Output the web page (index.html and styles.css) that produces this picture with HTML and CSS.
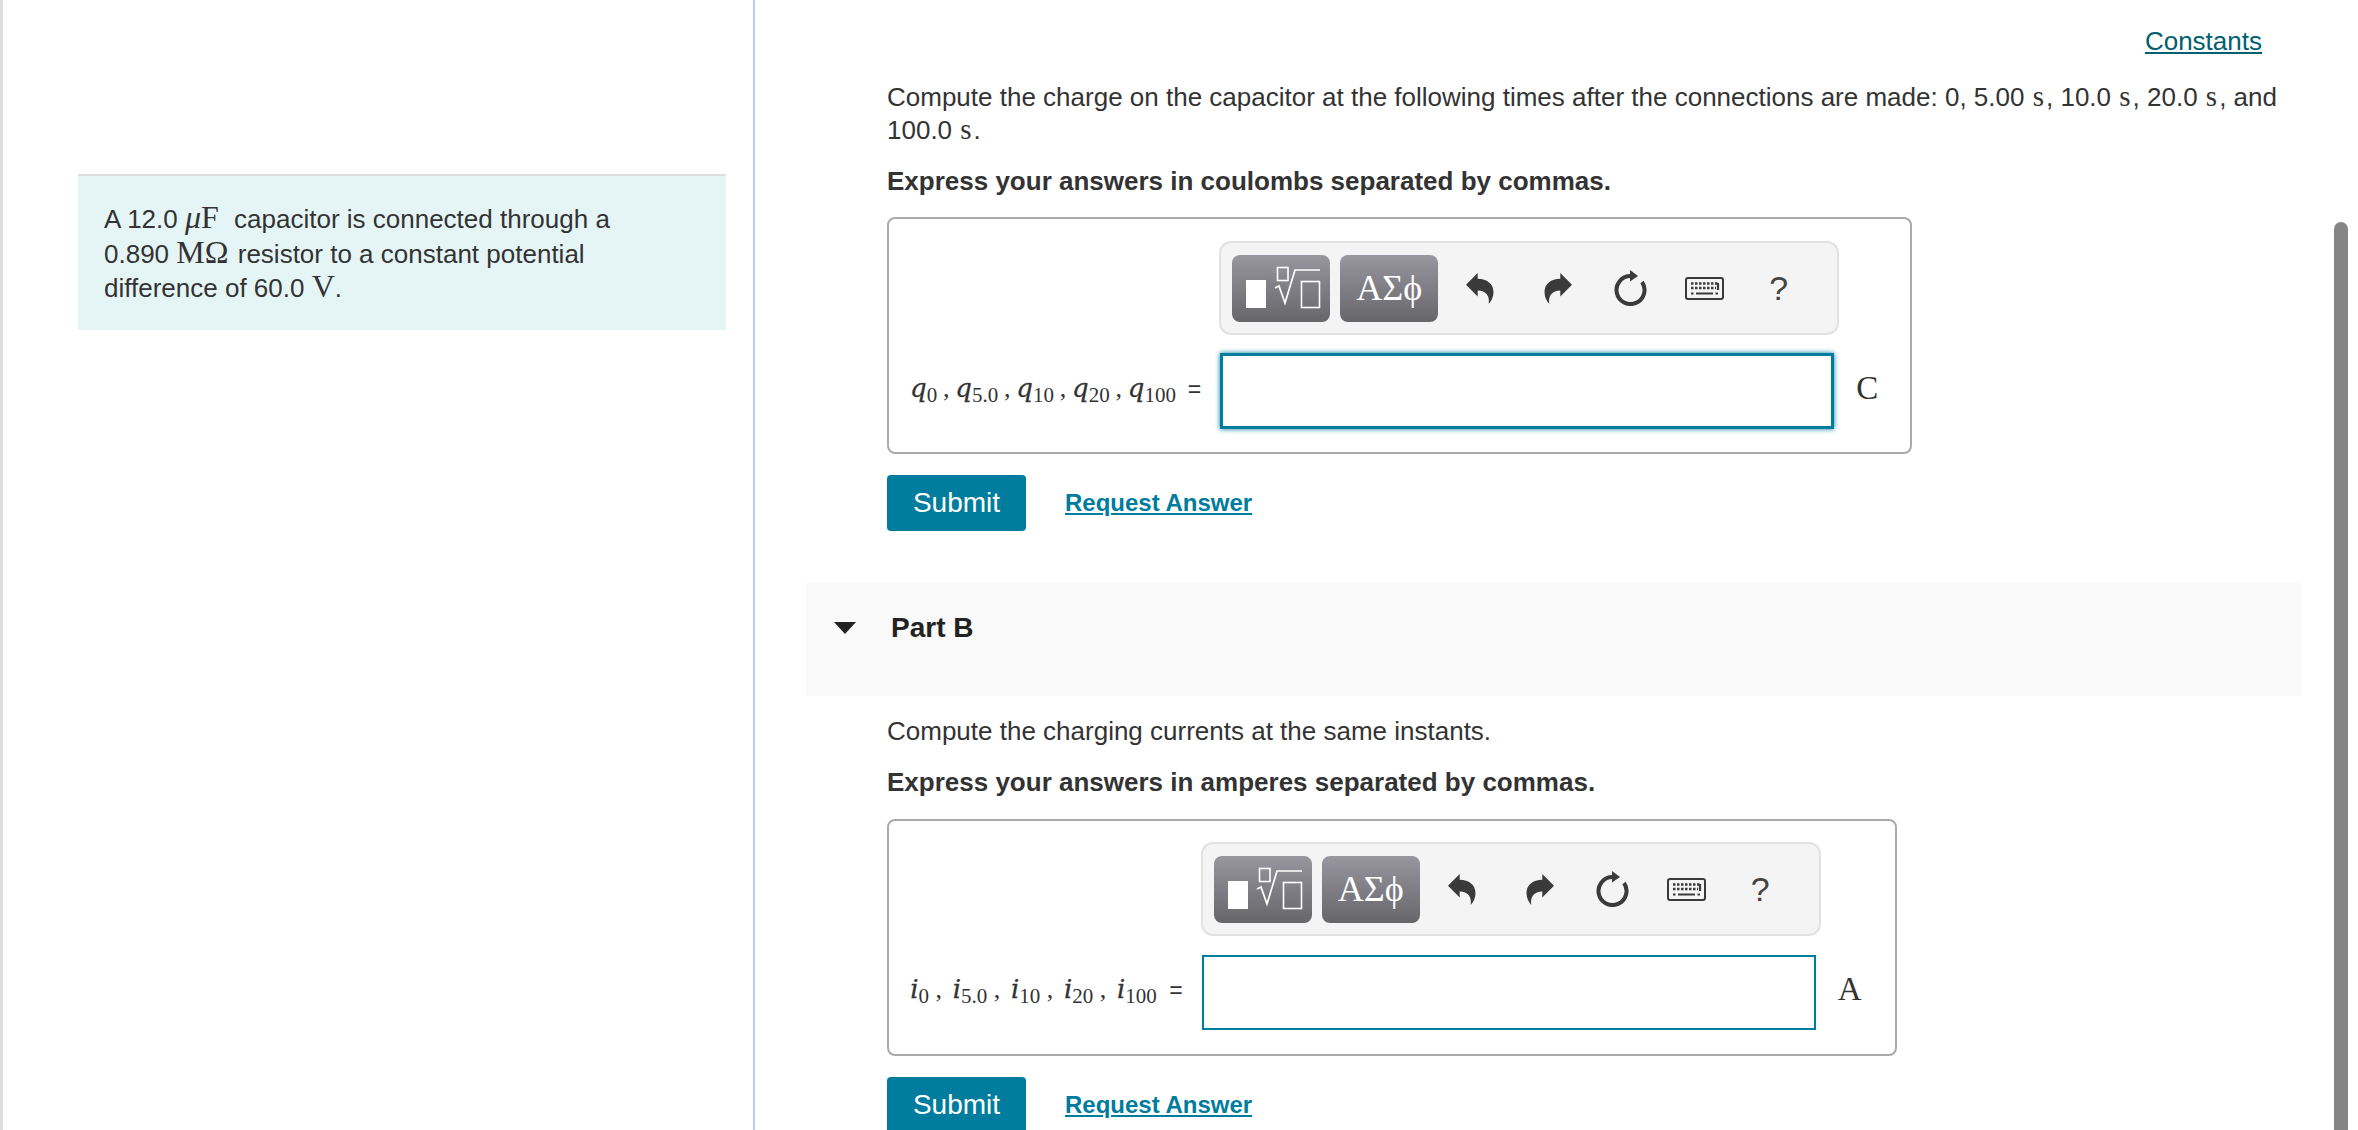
FILE: index.html
```html
<!DOCTYPE html>
<html lang="en">
<head>
    <meta charset="UTF-8">
    <title>Charging a capacitor</title>
    <link rel="stylesheet" href="styles.css">
</head>
<body>

<aside class="sidebar">
    <div class="problem">
        <p>A 12.0 <span class="m m-gap"><i>μ</i>F</span> capacitor is connected through a<br>
        0.890 <span class="m m-gap-sm">MΩ</span> resistor to a constant potential<br>
        difference of 60.0 <span class="m">V</span>.</p>
    </div>
</aside>

<main class="main">
    <div class="constants"><a href="#">Constants</a></div>

    <section class="part">
        <p class="text">Compute the charge on the capacitor at the following times after the connections are made: 0, 5.00 <span class="m-s">s</span>, 10.0 <span class="m-s">s</span>, 20.0 <span class="m-s">s</span>, and 100.0 <span class="m-s">s</span>.</p>
        <p class="text strong">Express your answers in coulombs separated by commas.</p>

        <div class="panel panel-a">
            <div class="toolbar">
                <button class="tool">
                    <svg width="98" height="67" viewBox="0 0 98 67"><rect x="14" y="25" width="20" height="28" fill="#fff"/><rect x="45.5" y="12.5" width="10.5" height="13" fill="none" stroke="#fff" stroke-width="1.6"/><path d="M43 33l4-2 6 17 10-33h25" fill="none" stroke="#fff" stroke-width="1.7"/><rect x="69.5" y="26.5" width="18" height="26" fill="none" stroke="#fff" stroke-width="1.6"/></svg>
                </button>
                <button class="tool tool-text">AΣϕ</button>
                <span class="icons">
                    <svg class="undo" width="28" height="31" viewBox="0 0 28 31"><path d="M0 11.7L11.7 0v5.7C21 5.7 27.5 11 27.5 19c0 5-2 9-4.800 12C24 23 20 17.500 11.700 17.500v6z" fill="#3a3a3a"/></svg>
                    <svg class="redo" width="28" height="31" viewBox="0 0 28 31"><path d="M0 11.7L11.7 0v5.7C21 5.7 27.5 11 27.5 19c0 5-2 9-4.800 12C24 23 20 17.500 11.700 17.500v6z" fill="#3a3a3a"/></svg>
                    <svg class="reset" width="33" height="36" viewBox="0 0 33 36"><path d="M16.500 6A14 14 0 1 0 28 12" fill="none" stroke="#3a3a3a" stroke-width="4"/><path d="M16 0l8 6-8 5.500z" fill="#3a3a3a"/></svg>
                    <svg class="keys" width="39" height="23" viewBox="0 0 39 23"><rect x="1" y="1" width="37" height="21" rx="2" fill="none" stroke="#3a3a3a" stroke-width="2"/><path d="M6 6.500h27M6 11h25" stroke="#3a3a3a" stroke-width="2.500" stroke-dasharray="2.500 1.500" fill="none"/><path d="M11 16.500h17M6 16.500h2.500M30.500 16.500h2.500M33 6v7" stroke="#3a3a3a" stroke-width="2.200" fill="none"/></svg>
                    <span class="help">?</span>
                </span>
            </div>
            <div class="label"><i>q</i><sub>0</sub> , <i>q</i><sub>5.0</sub> , <i>q</i><sub>10</sub> , <i>q</i><sub>20</sub> , <i>q</i><sub>100</sub> <span class="eq">=</span></div>
            <input class="answer focused" type="text">
            <div class="unit">C</div>
        </div>

        <div class="actions">
            <button class="submit">Submit</button>
            <a class="request" href="#">Request Answer</a>
        </div>
    </section>

    <div class="part-head">
        <span class="caret"></span>
        <h2>Part B</h2>
    </div>

    <section class="part">
        <p class="text">Compute the charging currents at the same instants.</p>
        <p class="text strong">Express your answers in amperes separated by commas.</p>

        <div class="panel panel-b">
            <div class="toolbar">
                <button class="tool">
                    <svg width="98" height="67" viewBox="0 0 98 67"><rect x="14" y="25" width="20" height="28" fill="#fff"/><rect x="45.5" y="12.5" width="10.5" height="13" fill="none" stroke="#fff" stroke-width="1.6"/><path d="M43 33l4-2 6 17 10-33h25" fill="none" stroke="#fff" stroke-width="1.7"/><rect x="69.5" y="26.5" width="18" height="26" fill="none" stroke="#fff" stroke-width="1.6"/></svg>
                </button>
                <button class="tool tool-text">AΣϕ</button>
                <span class="icons">
                    <svg class="undo" width="28" height="31" viewBox="0 0 28 31"><path d="M0 11.7L11.7 0v5.7C21 5.7 27.5 11 27.5 19c0 5-2 9-4.800 12C24 23 20 17.500 11.700 17.500v6z" fill="#3a3a3a"/></svg>
                    <svg class="redo" width="28" height="31" viewBox="0 0 28 31"><path d="M0 11.7L11.7 0v5.7C21 5.7 27.5 11 27.5 19c0 5-2 9-4.800 12C24 23 20 17.500 11.700 17.500v6z" fill="#3a3a3a"/></svg>
                    <svg class="reset" width="33" height="36" viewBox="0 0 33 36"><path d="M16.500 6A14 14 0 1 0 28 12" fill="none" stroke="#3a3a3a" stroke-width="4"/><path d="M16 0l8 6-8 5.500z" fill="#3a3a3a"/></svg>
                    <svg class="keys" width="39" height="23" viewBox="0 0 39 23"><rect x="1" y="1" width="37" height="21" rx="2" fill="none" stroke="#3a3a3a" stroke-width="2"/><path d="M6 6.500h27M6 11h25" stroke="#3a3a3a" stroke-width="2.500" stroke-dasharray="2.500 1.500" fill="none"/><path d="M11 16.500h17M6 16.500h2.500M30.500 16.500h2.500M33 6v7" stroke="#3a3a3a" stroke-width="2.200" fill="none"/></svg>
                    <span class="help">?</span>
                </span>
            </div>
            <div class="label"><i>i</i><sub>0</sub> , <i>i</i><sub>5.0</sub> , <i>i</i><sub>10</sub> , <i>i</i><sub>20</sub> , <i>i</i><sub>100</sub> <span class="eq">=</span></div>
            <input class="answer" type="text">
            <div class="unit">A</div>
        </div>

        <div class="actions">
            <button class="submit">Submit</button>
            <a class="request" href="#">Request Answer</a>
        </div>
    </section>
</main>

<div class="scrollbar"></div>

</body>
</html>
```

FILE: styles.css
```css
* {
    box-sizing: border-box;
}

html, body {
    height: 100%;
}

body {
    margin: 0;
    display: flex;
    overflow: hidden;
    background-color: #fff;
    color: #333;
    font-family: "Liberation Sans", Arial, sans-serif;
    font-size: 26px;
}

p {
    margin: 0;
}

/* math bits in the running text */
.m {
    font-family: "Liberation Serif", serif;
    font-size: 32px;
    line-height: 0;
}

.m-gap {
    margin-right: 8px;
}

.m-gap-sm {
    margin-right: 2px;
}

.m-s {
    margin: 0 2px 0 1px;
    font-family: "Liberation Serif", serif;
    font-size: 29px;
    line-height: 0;
}

/* left column */
.sidebar {
    flex: none;
    width: 755px;
    padding: 174px 27px 0 75px;
    border-left: 3px solid #ddd;
    border-right: 2px solid #b5d0e8;
}

.problem {
    height: 156px;
    padding: 26px 26px 0;
    background-color: #e5f5f6;
    border-top: 2px solid #ddd;
    line-height: 34.5px;
}

/* right column */
.main {
    flex: none;
    width: 1603px;
    padding: 25px 57px 0 51px;
}

.constants {
    height: 32px;
    margin-bottom: 24px;
    margin-right: 39px;
    line-height: 32px;
    text-align: right;
}

.constants a {
    color: #00606f;
}

.part {
    padding-left: 81px;
}

.text {
    line-height: 33px;
    margin-bottom: 18px;
}

.strong {
    font-weight: bold;
    margin-bottom: 20px;
}

.panel {
    display: grid;
    grid-template-columns: auto 614px auto;
    column-gap: 19px;
    align-items: center;
    justify-content: start;
    border: 2px solid #aaa;
    border-radius: 8px;
}

.panel-a {
    width: 1025px;
    margin-top: -1px;
    row-gap: 18px;
    padding: 22px 22px 23px 21px;
}

.panel-a .answer {
    height: 76px;
}

.panel-a .label {
    word-spacing: -0.7px;
}

.panel-b {
    width: 1010px;
    row-gap: 19px;
    padding: 21px 22px 24px 17px;
}

.panel-b .label i {
    margin-left: 4.2px;
}

.toolbar {
    grid-column: 2 / 4;
    display: flex;
    align-items: center;
    width: 620px;
    height: 94px;
    margin-left: -1px;
    padding-left: 11px;
    background-color: #f4f4f4;
    border: 2px solid #e2e2e2;
    border-radius: 12px;
}

.tool {
    display: flex;
    align-items: center;
    justify-content: center;
    width: 98px;
    height: 67px;
    margin-right: 10px;
    padding: 0;
    border: none;
    border-radius: 8px;
    background: linear-gradient(#98969f, #66666a);
    color: #fff;
}

.tool-text {
    font-family: "Liberation Serif", serif;
    font-size: 36px;
}

.icons {
    display: flex;
    align-items: center;
    margin-left: 18px;
}

.redo {
    margin-left: 50px;
    transform: scaleX(-1);
}

.reset {
    margin-left: 42px;
}

.keys {
    margin-left: 38px;
}

.help {
    margin-left: 45px;
    color: #444;
    font-size: 34px;
    line-height: 1;
}

.label {
    margin-bottom: 6px;
    font-family: "Liberation Serif", serif;
    font-size: 26px;
    white-space: nowrap;
}

.label i {
    font-family: "DejaVu Serif", serif;
    font-size: 26px;
    -webkit-text-stroke: 0.3px #333;
}

.label sub {
    font-size: 21px;
    line-height: 0;
    vertical-align: -5px;
}

.eq {
    margin-left: 6px;
    font-family: "Liberation Sans", Arial, sans-serif;
    font-size: 23px;
}

.answer {
    width: 614px;
    height: 75px;
    padding: 0;
    background-color: #fff;
    border: 2px solid #007c9e;
    outline: none;
}

.answer.focused {
    border-width: 3px;
    box-shadow: 0 0 5px #007c9e;
}

.unit {
    margin-bottom: 6px;
    margin-left: 3px;
    font-family: "Liberation Serif", serif;
    font-size: 33px;
}

.actions {
    display: flex;
    align-items: center;
    gap: 39px;
    margin-top: 21px;
}

.submit {
    width: 139px;
    height: 56px;
    padding: 0;
    background-color: #007c9e;
    border: none;
    border-radius: 4px;
    color: #fff;
    font-family: "Liberation Sans", Arial, sans-serif;
    font-size: 28px;
}

.request {
    color: #007c9e;
    font-size: 24px;
    font-weight: bold;
}

.part-head {
    display: flex;
    align-items: center;
    gap: 35px;
    height: 113px;
    margin: 52px 0 19px;
    padding: 0 0 24px 28px;
    background-color: #f9f9f9;
}

.caret {
    width: 0;
    height: 0;
    border-left: 11px solid transparent;
    border-right: 11px solid transparent;
    border-top: 12px solid #222;
}

.part-head h2 {
    margin: 0;
    color: #222;
    font-size: 28px;
    line-height: 32px;
}

/* overlay scrollbar */
.scrollbar {
    position: absolute;
    top: 222px;
    right: 10px;
    bottom: 0;
    width: 14px;
    background-color: #858585;
    border-radius: 7px 7px 0 0;
}
```
